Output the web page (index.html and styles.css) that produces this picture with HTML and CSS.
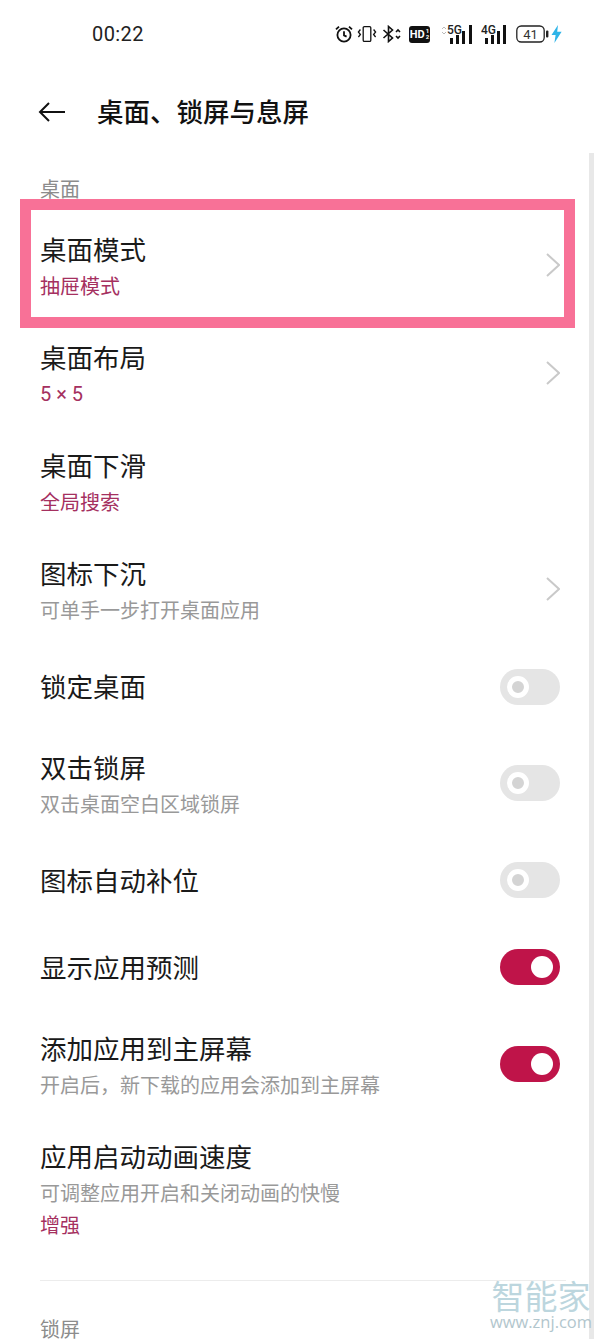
FILE: index.html
```html
<!DOCTYPE html>
<html lang="zh-CN">
<head>
    <meta charset="utf-8">
    <meta content="width=device-width, initial-scale=1" name="viewport">
    <title>桌面、锁屏与息屏</title>
    <link rel="stylesheet" href="styles.css">
</head>

<body>
<div class="status-bar">
    <span class="time">00:22</span>
    <div class="status-icons">
        <svg class="ic-alarm" width="18" height="18" viewBox="0 0 18 18" fill="none" stroke="#111" stroke-width="1.8">
            <circle cx="9" cy="10" r="6.6"/>
            <path d="M9 6.2V10.4L11.6 11.6"/>
            <path d="M1 4.4L4 1.6M17 4.4L14 1.6"/>
        </svg>
        <svg class="ic-vibrate" width="20" height="18" viewBox="0 0 20 18" fill="none" stroke="#111" stroke-width="1.3">
            <rect x="6.2" y="1.6" width="7.6" height="14.8" rx="1.2"/>
            <path d="M3.4 4.5L1.4 7L3.4 9.5L1.4 12M16.6 4.5L18.6 7L16.6 9.5L18.6 12"/>
        </svg>
        <svg class="ic-bt" width="19" height="18" viewBox="0 0 19 18" fill="none" stroke="#111" stroke-width="1.6">
            <path d="M1.5 5L10.5 13L6.5 16.5V1.5L10.5 5L1.5 13"/>
            <path d="M14 7L16 5L18 7M14 11L16 13L18 11"/>
        </svg>
        <div class="hd-badge">HD<small>1<br>2</small></div>
        <svg class="ic-5g" width="32" height="20" viewBox="0 0 32 20">
            <path d="M1 5L3 3L5 5M1 8L3 10L5 8" fill="none" stroke="#bbb" stroke-width="1"/>
            <text x="6" y="10" class="net-label">5G</text>
            <rect x="9" y="14" width="3" height="6" fill="#111"/>
            <rect x="15" y="11" width="3" height="9" fill="#111"/>
            <rect x="21" y="7" width="3" height="13" fill="#111"/>
            <rect x="28" y="1" width="3" height="19" fill="#111"/>
        </svg>
        <svg class="ic-4g" width="26" height="20" viewBox="0 0 26 20">
            <text x="0" y="10" class="net-label">4G</text>
            <rect x="4" y="14" width="3" height="6" fill="#111"/>
            <rect x="10" y="11" width="3" height="9" fill="#111"/>
            <rect x="16" y="7" width="3" height="13" fill="#111"/>
            <rect x="22" y="1" width="3" height="19" fill="#111"/>
        </svg>
        <svg class="ic-battery" width="33" height="18" viewBox="0 0 33 18">
            <rect x="0.8" y="1" width="27.4" height="16" rx="4.5" fill="none" stroke="#222" stroke-width="1.3"/>
            <rect x="30" y="5.5" width="2.4" height="7" rx="1" fill="#222"/>
            <text x="14.5" y="13.6" class="batt-label" text-anchor="middle">41</text>
        </svg>
        <svg class="ic-bolt" width="11" height="18" viewBox="0 0 11 18">
            <path d="M7 0L0.5 10H4.6L3.4 18L10.6 6.8H6.2Z" fill="#2fb4e8"/>
        </svg>
    </div>
</div>

<div class="header">
    <svg width="28" height="22" viewBox="0 0 28 22" fill="none" stroke="#111" stroke-width="2">
        <path d="M27 11H2M11 2L2 11L11 20"/>
    </svg>
    <h1>桌面、锁屏与息屏</h1>
</div>

<div class="section-label">桌面</div>

<div class="row has-sub">
    <div class="mark"></div>
    <div class="row-text">
        <div class="row-title">桌面模式</div>
        <div class="row-sub value">抽屉模式</div>
    </div>
    <svg class="chevron" width="14" height="24" viewBox="0 0 14 24"><path d="M1 1L13 12L1 23"/></svg>
</div>
<div class="row has-sub">
    <div class="row-text">
        <div class="row-title">桌面布局</div>
        <div class="row-sub value latin">5 × 5</div>
    </div>
    <svg class="chevron" width="14" height="24" viewBox="0 0 14 24"><path d="M1 1L13 12L1 23"/></svg>
</div>
<div class="row has-sub">
    <div class="row-text">
        <div class="row-title">桌面下滑</div>
        <div class="row-sub value">全局搜索</div>
    </div>
</div>
<div class="row has-sub">
    <div class="row-text">
        <div class="row-title">图标下沉</div>
        <div class="row-sub">可单手一步打开桌面应用</div>
    </div>
    <svg class="chevron" width="14" height="24" viewBox="0 0 14 24"><path d="M1 1L13 12L1 23"/></svg>
</div>
<div class="row single">
    <div class="row-text">
        <div class="row-title">锁定桌面</div>
    </div>
    <div class="toggle"></div>
</div>
<div class="row has-sub">
    <div class="row-text">
        <div class="row-title">双击锁屏</div>
        <div class="row-sub">双击桌面空白区域锁屏</div>
    </div>
    <div class="toggle"></div>
</div>
<div class="row single raised">
    <div class="row-text">
        <div class="row-title">图标自动补位</div>
    </div>
    <div class="toggle"></div>
</div>
<div class="row single predict raised">
    <div class="row-text">
        <div class="row-title">显示应用预测</div>
    </div>
    <div class="toggle on"></div>
</div>
<div class="row has-sub">
    <div class="row-text">
        <div class="row-title">添加应用到主屏幕</div>
        <div class="row-sub">开启后，新下载的应用会添加到主屏幕</div>
    </div>
    <div class="toggle on"></div>
</div>
<div class="row speed">
    <div class="row-text">
        <div class="row-title">应用启动动画速度</div>
        <div class="row-sub">可调整应用开启和关闭动画的快慢</div>
        <div class="row-sub value tight">增强</div>
    </div>
</div>

<div class="divider"></div>
<div class="section-label lock">锁屏</div>

<div class="scrollbar"></div>
<div class="watermark">
    <div class="wm-name">智能家</div>
    <div class="wm-url">www.znj.com</div>
</div>
</body>
</html>
```

FILE: styles.css
```css
html, body {
    height: 1339px;
    overflow: hidden;
}

body {
    margin: 0;
    position: relative;
    background: #fff;
    color: #111;
    font-family: "Noto Sans CJK SC", "Noto Sans", sans-serif;
}

.status-bar {
    height: 68px;
    display: flex;
    align-items: center;
    padding: 0 38px 0 92px;
    box-sizing: border-box;
    width: 600px;
}

.time {
    font-family: Roboto, sans-serif;
    font-size: 20px;
    color: #222;
    letter-spacing: 0.4px;
}

.status-icons {
    margin-left: auto;
    display: flex;
    align-items: center;
}

.ic-vibrate {
    margin-left: 4px;
}

.ic-bt {
    margin-left: 5px;
}

.hd-badge {
    display: flex;
    align-items: center;
    justify-content: center;
    width: 21px;
    height: 17px;
    margin-left: 8px;
    background: #111;
    border-radius: 3px;
    color: #fff;
    font-family: Roboto, sans-serif;
    font-weight: 700;
    font-size: 11px;
}

.hd-badge small {
    font-size: 6px;
    line-height: 6px;
    margin-left: 1px;
}

.ic-5g {
    margin-left: 11px;
}

.ic-4g {
    margin-left: 8px;
}

.ic-battery {
    margin-left: 9px;
}

.ic-bolt {
    margin-left: 2px;
}

.net-label {
    font-family: Roboto, sans-serif;
    font-size: 12px;
    font-weight: 500;
    fill: #222;
}

.batt-label {
    font-family: Roboto, sans-serif;
    font-size: 13px;
    fill: #333;
}

.header {
    display: flex;
    align-items: center;
    height: 88px;
    padding-left: 38px;
}

.header h1 {
    margin: 0 0 2px 31px;
    font-size: 26.5px;
    font-weight: 500;
    line-height: 36px;
}

.section-label {
    padding-left: 40px;
    font-size: 20px;
    line-height: 28px;
    color: #8c8c8c;
    margin: 19px 0 11px;
}

.row {
    position: relative;
    display: flex;
    align-items: center;
    padding: 18px 34px 18px 40px;
    width: 594px;
    box-sizing: border-box;
}

.row.single {
    padding-top: 23px;
    padding-bottom: 27px;
}

.row.single.predict {
    padding-top: 24px;
}

.row.speed {
    padding-bottom: 41px;
}

.row-text {
    flex: 1;
}

.row-title {
    margin: -1px 0 1px;
    font-size: 26.5px;
    line-height: 36px;
    color: #1a1a1a;
}

.row-sub {
    font-size: 20px;
    line-height: 36px;
    color: #999;
}

.row-sub.value {
    color: #a5305f;
}

.row-sub.latin {
    font-family: Roboto, sans-serif;
    font-size: 20px;
}

.row-sub.tight {
    line-height: 28px;
}

.has-sub .chevron,
.has-sub .toggle {
    margin-bottom: 6px;
}

.raised .toggle {
    margin-top: -2px;
}

.chevron {
    fill: none;
    stroke: #c9c9c9;
    stroke-width: 2;
}

.toggle {
    position: relative;
    width: 60px;
    height: 36px;
    border-radius: 18px;
    background: #e5e5e5;
}

.toggle::after {
    content: "";
    position: absolute;
    left: 7px;
    top: 7px;
    width: 12px;
    height: 12px;
    border: 5px solid #fff;
    border-radius: 50%;
    background: #d4d4d4;
}

.toggle.on {
    background: #bf1449;
}

.toggle.on::after {
    left: 31px;
    width: 22px;
    height: 22px;
    border: 0;
    background: #fff;
}

.mark {
    position: absolute;
    left: 20px;
    top: -15px;
    width: 555px;
    height: 129px;
    box-sizing: border-box;
    border: 11px solid #f87197;
}

.divider {
    height: 1px;
    margin: 0 34px 0 40px;
    background: #ececec;
}

.section-label.lock {
    margin: 38px 0 0;
    line-height: 20px;
}

.scrollbar {
    position: absolute;
    left: 589px;
    top: 153px;
    width: 5px;
    height: 1186px;
    background: #e8e8e8;
}

.watermark {
    position: absolute;
    left: 489px;
    top: 1278px;
    width: 104px;
    text-align: center;
}

.wm-name {
    font-size: 33px;
    line-height: 34px;
    color: #bcd6de;
}

.wm-url {
    font-family: "Open Sans", sans-serif;
    font-size: 16.5px;
    line-height: 20px;
    color: #b2c6cd;
    white-space: nowrap;
}
```
